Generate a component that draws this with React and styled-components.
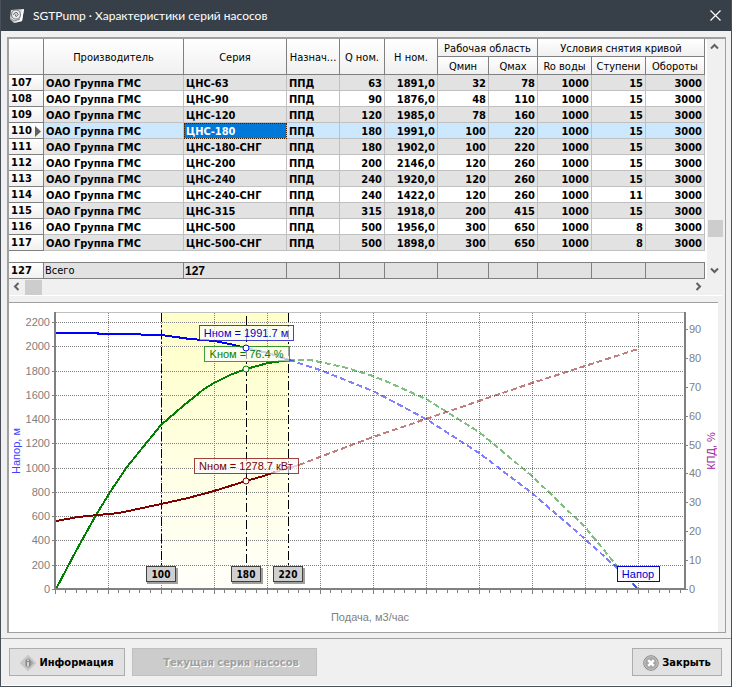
import React from 'react'
import styled, { createGlobalStyle } from 'styled-components';

const rows = [
  { id: 107, series: 'ЦНС-63', q: 63, h: '1891,0', qMin: 32, qMax: 78, stages: 15 },
  { id: 108, series: 'ЦНС-90', q: 90, h: '1876,0', qMin: 48, qMax: 110, stages: 15 },
  { id: 109, series: 'ЦНС-120', q: 120, h: '1985,0', qMin: 78, qMax: 160, stages: 15 },
  { id: 110, series: 'ЦНС-180', q: 180, h: '1991,0', qMin: 100, qMax: 220, stages: 15 },
  { id: 111, series: 'ЦНС-180-СНГ', q: 180, h: '1902,0', qMin: 100, qMax: 220, stages: 15 },
  { id: 112, series: 'ЦНС-200', q: 200, h: '2146,0', qMin: 120, qMax: 260, stages: 15 },
  { id: 113, series: 'ЦНС-240', q: 240, h: '1920,0', qMin: 120, qMax: 260, stages: 15 },
  { id: 114, series: 'ЦНС-240-СНГ', q: 240, h: '1422,0', qMin: 120, qMax: 260, stages: 11 },
  { id: 115, series: 'ЦНС-315', q: 315, h: '1918,0', qMin: 200, qMax: 415, stages: 15 },
  { id: 116, series: 'ЦНС-500', q: 500, h: '1956,0', qMin: 300, qMax: 650, stages: 8 },
  { id: 117, series: 'ЦНС-500-СНГ', q: 500, h: '1898,0', qMin: 300, qMax: 650, stages: 8 },
];

const columnWidths = [35, null, 103, 53, 45, 53, 51, 49, 54, 54, 59];

const chevrons = {
  up: 'M4 9.5 L7.5 6 L11 9.5',
  down: 'M4 5.5 L7.5 9 L11 5.5',
  left: 'M9.5 4 L6 7.5 L9.5 11',
  right: 'M5.5 4 L9 7.5 L5.5 11',
};

function ArrowButton({ direction, label }) {
  return (
    <ArrowButtonStyled type="button" aria-label={label}>
      <svg width="15" height="15" viewBox="0 0 15 15">
        <path d={chevrons[direction]} fill="none" stroke="#606060" strokeWidth="2" />
      </svg>
    </ArrowButtonStyled>
  )
}

function PumpTable() {
  return (
    <TableStyled>
      <colgroup>
        {columnWidths.map((width, i) => <col key={i} width={width || undefined} />)}
      </colgroup>
      <thead>
        <tr>
          <HeadCell rowSpan={2} />
          <HeadCell rowSpan={2}>Производитель</HeadCell>
          <HeadCell rowSpan={2}>Серия</HeadCell>
          <HeadCell rowSpan={2}>Назнач...</HeadCell>
          <HeadCell rowSpan={2}>Q ном.</HeadCell>
          <HeadCell rowSpan={2}>H ном.</HeadCell>
          <HeadCell colSpan={2}>Рабочая область</HeadCell>
          <HeadCell colSpan={3}>Условия снятия кривой</HeadCell>
        </tr>
        <tr>
          <HeadCell>Qмин</HeadCell>
          <HeadCell>Qмах</HeadCell>
          <HeadCell>Ro воды</HeadCell>
          <HeadCell>Ступени</HeadCell>
          <HeadCell>Обороты</HeadCell>
        </tr>
      </thead>
      <tbody>
        {rows.map((row, i) => {
          const current = row.id === 110;
          return (
            <BodyRow key={row.id} $current={current} $odd={i % 2 === 0}>
              <RowNumber scope="row">
                {row.id}
                {current && (
                  <Marker width="6" height="11" viewBox="0 0 6 11">
                    <path d="M0 0 L6 5.5 L0 11 Z" fill="#606060" />
                  </Marker>
                )}
              </RowNumber>
              <Cell>ОАО Группа ГМС</Cell>
              <Cell $selected={current}>{row.series}</Cell>
              <Cell>ППД</Cell>
              <Cell $number>{row.q}</Cell>
              <Cell $number>{row.h}</Cell>
              <Cell $number>{row.qMin}</Cell>
              <Cell $number>{row.qMax}</Cell>
              <Cell $number>1000</Cell>
              <Cell $number>{row.stages}</Cell>
              <Cell $number>3000</Cell>
            </BodyRow>
          )
        })}
        <SpacerRow><td colSpan={11} /></SpacerRow>
      </tbody>
      <tfoot>
        <tr>
          <RowNumber scope="row" $total>127</RowNumber>
          <TotalCell>Всего</TotalCell>
          <TotalCell $strong>127</TotalCell>
          {columnWidths.slice(3).map((_, i) => <TotalCell key={i} />)}
        </tr>
      </tfoot>
    </TableStyled>
  )
}

const headSolid = '56,333 98,333 98,334 140,334 142,335 161,335 176,337 190,339 204,340 214,341 230,344 246,348';
const headFaded = '246,348 268,353 289,360';
const headDashed = '289,360 320,370 373,391 426,419 479,453 532,493 585,539 617,568 638,589';
const effSolid = '56,589 76,551 96,515 112,489 127,467 139,452 161,425 183,406 204,389 214,383 230,375 246,369 268,363 289,360';
const effDashed = '289,360 310,360 320,362 347,368 373,376 390,383 426,399 479,432 532,476 585,527 617,566 638,589';
const powerSolid = '56,521 78,517 98,515 119,513 161,504 188,498 214,491 246,481 267,475 275,472';
const powerFaded = '275,472 289,468 299,465';
const powerDashed = '299,465 320,457 373,437 426,419 479,401 532,383 585,366 638,349';

const callouts = [
  { x: 199, y: 325, width: 94, color: '#0000d0', text: 'Hном = 1991.7 м' },
  { x: 204, y: 346, width: 85, color: '#008000', text: 'Kном = 76.4 %' },
  { x: 194, y: 458, width: 104, color: '#800000', text: 'Nном = 1278.7 кВт' },
  { x: 617, y: 566, width: 42, color: '#0000d0', text: 'Напор', solid: true },
];

const flowTags = [{ x: 161, value: 100 }, { x: 246, value: 180 }, { x: 288, value: 220 }];

function Chart() {
  const levels = Array.from({ length: 12 }, (_, i) => ({ value: i * 200, y: Math.round(589 - i * 24.27) }));
  const percents = Array.from({ length: 10 }, (_, i) => ({ value: i * 10, y: Math.round(589 - i * 28.9) }));
  const ticks = Array.from({ length: 60 }, (_, i) => ({ major: i % 5 === 0, x: Math.floor(55 + i * 10.6) }));

  return (
    <ChartStyled viewBox="9 303 709 329" role="img">
      <defs>
        <linearGradient id="zone" x1="0" y1="0" x2="0" y2="1">
          <stop offset="0" stopColor="#ffffc8" />
          <stop offset="1" stopColor="#fffffa" />
        </linearGradient>
      </defs>
      <g shapeRendering="crispEdges">
        <rect x="161" y="313" width="128" height="276" fill="url(#zone)" />
        <path d="M56 312.5 H684" stroke="#c0c0c0" />
        <g stroke="#808080" strokeDasharray="1 1">
          {levels.slice(1).map(({ y }) => <path key={y} d={`M56 ${y + 0.5} H684`} />)}
          {ticks.filter((t) => t.major && t.x > 55).map(({ x }) => (
            <path key={x} d={`M${x + 0.5} 313 V588`} />
          ))}
        </g>
        <g stroke="#000" strokeDasharray="9 3 2 3">
          <path d="M161.5 313 V566" />
          <path d="M246.5 316 V566" />
          <path d="M288.5 313 V566" />
        </g>
        <g fill="none" strokeWidth="2">
          <polyline points={effSolid} stroke="#008000" />
          <polyline points={headSolid} stroke="#0000ff" />
          <polyline points={powerSolid} stroke="#800000" />
          <g strokeOpacity="0.5">
            <polyline points={headFaded} stroke="#0000ff" />
            <polyline points={powerFaded} stroke="#800000" />
            <g strokeDasharray="6 3">
              <polyline points={effDashed} stroke="#008000" />
              <polyline points={headDashed} stroke="#0000ff" />
              <polyline points={powerDashed} stroke="#800000" />
            </g>
          </g>
        </g>
        <g stroke="#808080">
          <path d="M55 312 V590 M54 589 H686 M685 312 V590" strokeWidth="2" />
          {levels.map(({ y }) => <path key={y} d={`M52 ${y + 0.5} H55`} />)}
          {percents.map(({ y }) => <path key={y} d={`M685 ${y + 0.5} H688`} />)}
          {ticks.map(({ x, major }) => <path key={x} d={`M${x + 0.5} 590 V${major ? 594 : 593}`} />)}
        </g>
      </g>

      <AxisText as="g" textAnchor="end">
        {levels.map(({ value, y }) => <text key={value} x="50" y={y + 4}>{value}</text>)}
      </AxisText>
      <AxisText as="g">
        {percents.map(({ value, y }) => <text key={value} x="689" y={y + 4}>{value}</text>)}
      </AxisText>
      <AxisText x="370" y="621" textAnchor="middle">Подача, м3/час</AxisText>
      <AxisText $color="#4040ff" textAnchor="middle" transform="translate(20 451) rotate(-90)">Напор, м</AxisText>
      <AxisText $color="#a020a0" textAnchor="middle" transform="translate(715 451) rotate(-90)">КПД, %</AxisText>

      {callouts.map(({ x, y, width, color, text, solid }) => (
        <g key={text}>
          <rect
            x={x + 0.5} y={y + 0.5} width={width} height="15"
            fill="#fafaff" fillOpacity={solid ? 0.95 : 0.65}
            stroke={color} strokeOpacity={solid ? 1 : 0.75}
          />
          <AxisText $color={color} x={x + width / 2} y={y + 12} textAnchor="middle">{text}</AxisText>
        </g>
      ))}
      <g fill="#fff" strokeWidth="1">
        <circle cx="246" cy="348" r="3" stroke="#0000ff" />
        <circle cx="246" cy="369" r="3" stroke="#008000" />
        <circle cx="246" cy="481" r="3" stroke="#800000" />
      </g>
      {flowTags.map(({ x, value }) => (
        <g key={value}>
          <rect x={x - 14} y="568" width="31" height="16" fill="#a0a0a0" />
          <rect x={x - 14.5} y="566.5" width="29" height="15" fill="#d0d0d0" stroke="#404040" />
          <TagText x={x} y="578" textAnchor="middle">{value}</TagText>
        </g>
      ))}
    </ChartStyled>
  )
}

function PumpLogo() {
  return (
    <svg width="16" height="16" viewBox="0 0 16 16">
      <path d="M2 2 L15 1 L13 13 L5 15 L1 11 Z" fill="#d8dade" />
      <path d="M13 2 L15 1 L13 13 L5 15 L11 12 Z" fill="#fff" />
      <circle cx="7" cy="6.5" r="4.5" fill="#eee" stroke="#7c838b" strokeWidth="1.2" />
      <path d="M4.5 7 Q5 4 8 4.5 Q10.5 6.5 7.5 8.5 Q5.5 8.5 7 6.3" fill="none" stroke="#5c636b" />
      <path d="M1.5 10.5 L5 13 L11 11" fill="none" stroke="#8a9097" />
    </svg>
  )
}

function App() {
  return (
    <WindowStyled>
      <GlobalStyle />
      <header>
        <PumpLogo />
        <h1>SGTPump · Характеристики серий насосов</h1>
        <button type="button" aria-label="Закрыть окно">
          <svg width="11" height="11" viewBox="0 0 11 11">
            <path d="M0.5 0.5 L10.5 10.5 M10.5 0.5 L0.5 10.5" stroke="#fff" strokeWidth="1.2" />
          </svg>
        </button>
      </header>
      <Frame>
        <GridArea>
          <TableArea><PumpTable /></TableArea>
          <ScrollBar $vertical>
            <ArrowButton direction="up" label="Вверх" />
            <Track $grow={165} />
            <Thumb $vertical />
            <Track $grow={26} />
            <ArrowButton direction="down" label="Вниз" />
          </ScrollBar>
          <ScrollBar>
            <ArrowButton direction="left" label="Влево" />
            <Thumb />
            <Track $grow={1} />
            <ArrowButton direction="right" label="Вправо" />
          </ScrollBar>
        </GridArea>
        <ChartPanel><Chart /></ChartPanel>
      </Frame>
      <footer>
        <ActionButton type="button" $width={116}>
          <svg width="16" height="16" viewBox="0 0 16 16">
            <path d="M8 1 L15 8 L8 15 L1 8 Z" fill="#a4a4a4" stroke="#c8c8c8" strokeWidth="2" strokeLinejoin="round" />
            <path d="M8 2 V14 L2 8 Z" fill="#c8c8c8" />
            <path d="M5.5 5 L8 3.5 L10.5 5 V11 L8 12.5 L5.5 11 Z" fill="#888" />
            <path d="M8 4.5 V6 M8 7 V11.5" fill="none" stroke="#eee" strokeWidth="1.5" />
          </svg>
          Информация
        </ActionButton>
        <ActionButton type="button" disabled $width={185}>Текущая серия насосов</ActionButton>
        <ActionButton type="button" $width={90} $last>
          <svg width="16" height="16" viewBox="0 0 16 16">
            <circle cx="8" cy="8" r="7.3" fill="#a6a6a6" stroke="#8c8c8c" />
            <circle cx="8" cy="8" r="6.3" fill="none" stroke="#c4c4c4" />
            <path d="M5.2 5.2 L10.8 10.8 M10.8 5.2 L5.2 10.8" stroke="#fff" strokeWidth="2.4" />
          </svg>
          Закрыть
        </ActionButton>
      </footer>
    </WindowStyled>
  )
}

const uiFont = `'DejaVu Sans Condensed', Tahoma, 'DejaVu Sans', sans-serif`;

const GlobalStyle = createGlobalStyle`
  *{
    box-sizing: border-box;
  }
  body{
    margin: 0;
    background: #f0f0f0;
    font: 11px/14px ${uiFont};
  }
  button{
    font: inherit;
    padding: 0;
    border: 0;
  }
`;

const WindowStyled = styled.div`
    display: flex;
    flex-direction: column;
    min-height: 100vh;
    background: #f0f0f0;
    border: 1px solid #49505a;
    border-top: 0;
    header{
      display: flex;
      align-items: center;
      gap: 8px;
      height: 31px;
      padding: 0 10px 0 8px;
      color: #fff;
      background: #374049;
      h1{
        flex: 1;
        margin: 0;
        font: 12px/16px Lato, 'Segoe UI', sans-serif;
      }
      button{
        display: flex;
        background: none;
      }
    }
    footer{
      display: flex;
      gap: 7px;
      margin-top: 5px;
      padding: 9px 9px 9px 8px;
      border-top: 1px solid #a0a0a0;
      border-bottom: 1px solid #fff;
    }
`;

const Frame = styled.main`
    margin: 6px 5px 0 6px;
    border: 1px solid #a0a0a0;
    border-top-width: 2px;
    border-left-width: 2px;
`;

const GridArea = styled.section`
    display: grid;
    grid-template-columns: 1fr 16px;
    margin-right: 2px;
    border-bottom: 1px solid #fff;
`;

const TableArea = styled.div`
    min-width: 0;
    padding-right: 2px;
    background: #fff;
`;

const TableStyled = styled.table`
    width: 100%;
    table-layout: fixed;
    border-collapse: separate;
    border-spacing: 0;
    white-space: nowrap;
`;

const HeadCell = styled.th`
    height: 18px;
    padding: 2px 1px 0;
    overflow: hidden;
    font-weight: normal;
    background: linear-gradient(#fff, #f0f0f0);
    border-right: 1px solid #808080;
    border-bottom: 1px solid #808080;
`;

const BodyRow = styled.tr`
    background: ${({ $current, $odd }) => $current ? '#cce8ff' : $odd ? '#e2e2e2' : '#fff'};
`;

const RowNumber = styled.th`
    height: ${({ $total }) => $total ? '17px' : '16px'};
    padding: 0 0 0 2px;
    font: bold 10px/14px 'DejaVu Sans', Verdana, sans-serif;
    text-align: left;
    background: linear-gradient(#fff, #f0f0f0);
    border-right: 1px solid #808080;
    border-bottom: 1px solid #808080;
    border-top: ${({ $total }) => $total ? '1px solid #808080' : '0'};
`;

const Marker = styled.svg`
    float: right;
    margin: 2px 2px 0 0;
`;

const Cell = styled.td`
    height: 16px;
    padding: 2px 2px 0;
    line-height: 13px;
    font-weight: bold;
    text-align: ${({ $number }) => $number ? 'right' : 'left'};
    color: ${({ $selected }) => $selected ? '#fff' : '#000'};
    background: ${({ $selected }) => $selected ? '#0078d7' : 'transparent'};
    outline: ${({ $selected }) => $selected ? '1px dotted #402000' : 'none'};
    outline-offset: -1px;
    border-right: 1px solid #c0c0c0;
    border-bottom: 1px solid #c0c0c0;
`;

const SpacerRow = styled.tr`
    td{
      height: 11px;
      padding: 0;
    }
`;

const TotalCell = styled.td`
    height: 17px;
    padding: 1px 1px 0;
    font: ${({ $strong }) => $strong ? `bold 12px/14px 'Liberation Sans', Arial, sans-serif` : 'inherit'};
    background: #e2e2e2;
    border: 1px solid #808080;
    border-left: 0;
`;

const ScrollBar = styled.div`
    display: flex;
    flex-direction: ${({ $vertical }) => $vertical ? 'column' : 'row'};
    align-items: center;
    background: #f0f0f0;
`;

const ArrowButtonStyled = styled.button`
    display: flex;
    width: 16px;
    height: 16px;
    background: none;
`;

const Track = styled.div`
    flex: ${({ $grow }) => $grow} 1 0;
`;

const Thumb = styled.div`
    width: ${({ $vertical }) => $vertical ? '15px' : '17px'};
    height: ${({ $vertical }) => $vertical ? '17px' : '15px'};
    background: #cdcdcd;
`;

const ChartPanel = styled.section`
    margin: 6px 7px 0 0;
    background: #fff;
    border-top: 1px solid #a0a0a0;
`;

const ChartStyled = styled.svg`
    display: block;
    width: 100%;
    height: auto;
`;

const AxisText = styled.text`
    font: 11px 'Liberation Sans', Arial, sans-serif;
    fill: ${({ $color }) => $color || '#808080'};
`;

const TagText = styled.text`
    font: bold 10px ${uiFont};
    fill: #000;
`;

const ActionButton = styled.button`
    display: flex;
    align-items: center;
    justify-content: center;
    gap: 3px;
    width: ${({ $width }) => $width}px;
    height: 28px;
    padding-top: 1px;
    margin-left: ${({ $last }) => $last ? 'auto' : '0'};
    font-weight: bold;
    color: #000;
    background: #e1e1e1;
    border: 1px solid #adadad;
    &:disabled{
      padding-left: 13px;
      color: #a0a0a0;
      text-shadow: 1px 1px #fff;
      background: #ccc;
      border-color: #bfbfbf;
    }
`;

export default App;
